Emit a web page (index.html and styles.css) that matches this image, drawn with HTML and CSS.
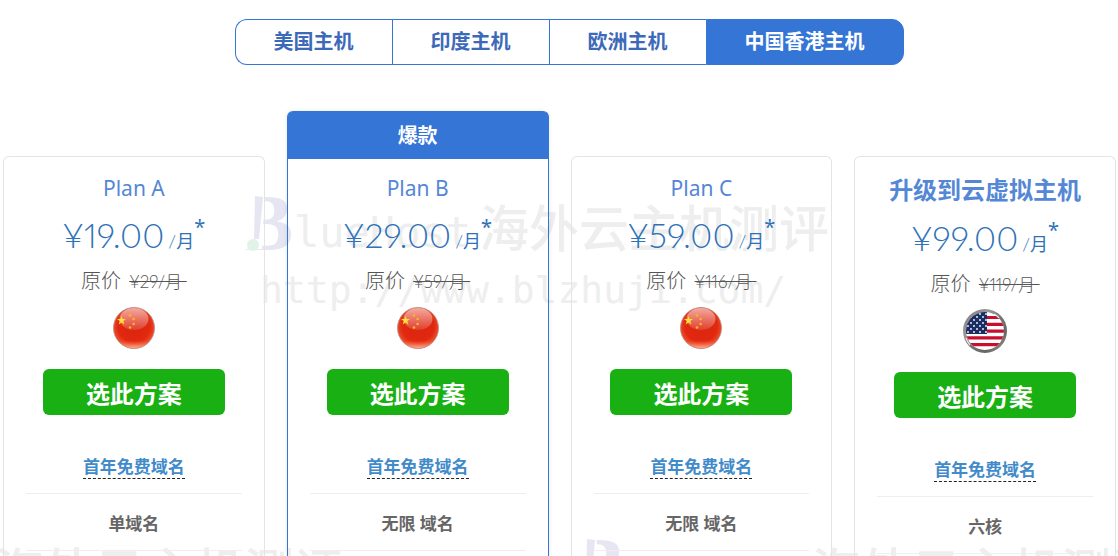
FILE: index.html
```html
<!DOCTYPE html>
<html lang="zh-CN">
<head>
    <meta charset="UTF-8">
    <meta name="viewport" content="width=device-width, initial-scale=1.0">
    <title>主机方案</title>
    <link rel="stylesheet" href="styles.css">
</head>
<body>
    <!-- 图标 -->
    <svg class="sprite" aria-hidden="true">
        <defs>
            <radialGradient id="cn-bg" cx="50%" cy="45%" r="56%">
                <stop offset="0" stop-color="#dc2410"/>
                <stop offset=".7" stop-color="#e0290f"/>
                <stop offset="1" stop-color="#f2593a"/>
            </radialGradient>
            <linearGradient id="gloss" x1="0" y1="0" x2="0" y2="1">
                <stop offset="0" stop-color="#fff" stop-opacity=".6"/>
                <stop offset="1" stop-color="#fff" stop-opacity=".12"/>
            </linearGradient>
            <linearGradient id="cn-low" x1="0" y1="0" x2="0" y2="1">
                <stop offset=".8" stop-color="#ff6a3c" stop-opacity="0"/>
                <stop offset="1" stop-color="#ffb79c"/>
            </linearGradient>
            <linearGradient id="ring" x1="0" y1="0" x2="1" y2="1">
                <stop offset="0" stop-color="#777"/>
                <stop offset=".3" stop-color="#999"/>
                <stop offset=".5" stop-color="#777"/>
                <stop offset=".75" stop-color="#666"/>
                <stop offset="1" stop-color="#aaa"/>
            </linearGradient>
            <clipPath id="us-clip"><circle cx="22" cy="22" r="19"/></clipPath>
            <pattern id="us-stars" width="6" height="6" patternUnits="userSpaceOnUse">
                <circle cx="2" cy="2" r=".9" fill="#fff"/>
                <circle cx="5" cy="5" r=".9" fill="#fff"/>
            </pattern>
        </defs>
        <symbol id="flag-cn" viewBox="0 0 44 44">
            <circle cx="22" cy="22" r="20.5" fill="url(#cn-bg)"/>
            <circle cx="22" cy="22" r="20.5" fill="url(#cn-low)" stroke="#b98a80" stroke-width=".8"/>
            <ellipse cx="22" cy="13" rx="14.5" ry="11" fill="url(#gloss)"/>
            <path fill="#ffe234" d="M9.5 10l1.1 3.1h3.4l-2.7 2 1 3.3-2.8-2-2.8 2 1-3.3-2.7-2h3.4z"/>
            <g fill="#f7b52a">
                <circle cx="18" cy="9.5" r="1.3"/>
                <circle cx="21.6" cy="13" r="1.3"/>
                <circle cx="21.6" cy="18" r="1.3"/>
                <circle cx="18" cy="21.5" r="1.3"/>
            </g>
        </symbol>
        <symbol id="flag-us" viewBox="0 0 44 44">
            <circle cx="22" cy="22" r="22" fill="url(#ring)"/>
            <g clip-path="url(#us-clip)">
                <rect width="44" height="44" fill="#fff"/>
                <path stroke="#c8102e" stroke-width="3.2" d="M0 8.5h44M0 15.3h44M0 22.1h44M0 28.9h44M0 35.7h44"/>
                <rect width="24" height="25" fill="#1b2d63"/>
                <rect width="24" height="24" fill="url(#us-stars)"/>
            </g>
            <path fill="none" stroke="#fff" stroke-opacity=".8" stroke-width="1.2" d="M31 5a19 19 0 0 1 5 4M3 29a20 20 0 0 0 4 7"/>
        </symbol>
        <symbol id="mark" viewBox="0 0 48 62">
            <text x="-6" y="57" class="mark-letter">B</text>
            <path fill="#fff" d="M0 0h19l-3 50v6H0z"/>
            <path fill="#e6e6f3" d="M9 3l8 1-4 42H8z"/>
            <circle cx="7" cy="52" r="6" fill="#e1f3e8"/>
        </symbol>
    </svg>

    <nav class="tabs">
        <button type="button">美国主机</button>
        <button type="button">印度主机</button>
        <button type="button">欧洲主机</button>
        <button type="button" class="active">中国香港主机</button>
    </nav>

    <main class="plans">
        <!-- 水印 -->
        <div class="watermark" aria-hidden="true">
            <svg><use href="#mark"/></svg>
            <p><span>lueHost</span>海外云主机测评</p>
            <p class="url">http://www.blzhuji.com/</p>
        </div>
        <div class="watermark low-left" aria-hidden="true">
            <svg><use href="#mark"/></svg>
            <p><span>lueHost</span>海外云主机测评</p>
        </div>
        <div class="watermark low-right" aria-hidden="true">
            <svg><use href="#mark"/></svg>
            <p><span>lueHost</span>海外云主机测评</p>
        </div>

        <section class="plan">
            <h3>Plan A</h3>
            <p class="price"><span class="yen">¥</span>19.00<small>/<b>月</b></small><sup>*</sup></p>
            <p class="old">原价 <del>¥29/月&nbsp;</del></p>
            <svg class="flag" role="img" aria-label="中国"><use href="#flag-cn"/></svg>
            <button type="button" class="buy">选此方案</button>
            <ul>
                <li><a href="#">首年免费域名</a></li>
                <li>单域名</li>
            </ul>
        </section>

        <section class="plan hot">
            <div class="badge">爆款</div>
            <h3>Plan B</h3>
            <p class="price"><span class="yen">¥</span>29.00<small>/<b>月</b></small><sup>*</sup></p>
            <p class="old">原价 <del>¥59/月&nbsp;</del></p>
            <svg class="flag" role="img" aria-label="中国"><use href="#flag-cn"/></svg>
            <button type="button" class="buy">选此方案</button>
            <ul>
                <li><a href="#">首年免费域名</a></li>
                <li>无限 域名</li>
            </ul>
        </section>

        <section class="plan">
            <h3>Plan C</h3>
            <p class="price"><span class="yen">¥</span>59.00<small>/<b>月</b></small><sup>*</sup></p>
            <p class="old">原价 <del>¥116/月&nbsp;</del></p>
            <svg class="flag" role="img" aria-label="中国"><use href="#flag-cn"/></svg>
            <button type="button" class="buy">选此方案</button>
            <ul>
                <li><a href="#">首年免费域名</a></li>
                <li>无限 域名</li>
            </ul>
        </section>

        <section class="plan cloud">
            <h3>升级到云虚拟主机</h3>
            <p class="price"><span class="yen">¥</span>99.00<small>/<b>月</b></small><sup>*</sup></p>
            <p class="old">原价 <del>¥119/月&nbsp;</del></p>
            <svg class="flag" role="img" aria-label="美国"><use href="#flag-us"/></svg>
            <button type="button" class="buy">选此方案</button>
            <ul>
                <li><a href="#">首年免费域名</a></li>
                <li>六核</li>
            </ul>
        </section>
    </main>
</body>
</html>
```
FILE: styles.css
```css
* {
    box-sizing: border-box;
}
body,p,ul,h3 {
    margin: 0;
    padding: 0;
}
body {
    min-height: 100vh;
    display: flex;
    flex-direction: column;
    background: #fff;
    color: #666;
    font-family: "Noto Sans", "Noto Sans CJK SC", sans-serif;
}
button {
    font-family: inherit;
    cursor: pointer;
}
.sprite {
    position: absolute;
    width: 0;
    height: 0;
}

/* 地区切换 */
.tabs {
    display: flex;
    justify-content: center;
    padding: 19px 0 0 20px;
}
.tabs button {
    height: 46px;
    padding: 0 38px;
    border: 1px solid #3575d5;
    border-right-width: 0;
    background: #fff;
    color: #3c6ab8;
    font-size: 20px;
    font-weight: 700;
    line-height: 30px;
}
.tabs button:first-child {
    border-radius: 12px 0 0 12px;
}
.tabs button:last-child {
    border-right-width: 1px;
    border-radius: 0 12px 12px 0;
}
.tabs .active {
    background: #3575d5;
    color: #fff;
}

/* 方案 */
.plans {
    position: relative;
    flex: 1;
    display: grid;
    grid-template-columns: repeat(4, 1fr);
    gap: 22px;
    padding: 91px 2px 0 3px;
    overflow: hidden;
}
.plan {
    display: flex;
    flex-direction: column;
    align-items: center;
    padding-top: 16px;
    border: 1px solid #e4e4e4;
    border-bottom: 0;
    border-radius: 6px 6px 0 0;
}
.hot {
    margin-top: -45px;
    padding-top: 0;
    border-color: #3575d5;
    box-shadow: 0 0 4px rgba(0,0,0,.1);
}
.badge {
    width: 100%;
    margin-bottom: 14px;
    border-radius: 4px 4px 0 0;
    background: #3575d5;
    color: #fff;
    font-size: 20px;
    font-weight: 700;
    line-height: 47px;
    text-align: center;
}
.plan h3 {
    color: #5487d6;
    font-size: 21px;
    font-weight: 400;
    line-height: 30px;
}
.cloud h3 {
    font-size: 24px;
    font-weight: 700;
    line-height: 33px;
}
.price {
    display: flex;
    align-items: baseline;
    height: 44px;
    margin-top: 10px;
    color: #2f72b8;
    font-family: Lato, "Noto Sans CJK SC", sans-serif;
    font-size: 34px;
    font-weight: 300;
    font-variant-numeric: proportional-nums;
    line-height: 44px;
}
.price small {
    margin-left: 4px;
    font-size: 18px;
}
.price b {
    font-weight: 400;
}
.price sup {
    align-self: flex-start;
    font-family: "Noto Sans", sans-serif;
    font-size: 20px;
    font-weight: 400;
    line-height: 28px;
}
.old {
    margin-top: 9px;
    color: #555;
    font-size: 20px;
    font-weight: 300;
    line-height: 30px;
}
.old del {
    margin-left: 3px;
    font-family: Lato, "Noto Sans CJK SC", sans-serif;
    font-size: 17px;
    font-variant-numeric: proportional-nums;
}
.flag {
    width: 44px;
    height: 44px;
    margin-top: 9px;
}
.buy {
    width: 70%;
    height: 46px;
    margin-top: 19px;
    border: 0;
    border-radius: 6px;
    background: #18b013;
    color: #fff;
    font-size: 24px;
    font-weight: 700;
}
.plan ul {
    align-self: stretch;
    margin: 22px 22px 0;
    list-style: none;
}
.plan li {
    padding: 18px 0 14px;
    border-bottom: 1px solid #eee;
    font-size: 17px;
    font-weight: 700;
    line-height: 24px;
    text-align: center;
}
.plan a {
    border-bottom: 1px dashed #222;
    color: #428bca;
    text-decoration: none;
}

/* 水印 */
.watermark {
    position: absolute;
    left: 246px;
    top: 128px;
    z-index: -1;
    display: grid;
    grid-template-columns: 48px auto;
    color: #eee;
    font-size: 50px;
    font-weight: 500;
    line-height: 70px;
    white-space: nowrap;
}
.watermark svg {
    width: 48px;
    height: 62px;
}
.watermark span,
.watermark .url {
    font-family: "DejaVu Sans Mono", monospace;
    font-size: 42px;
    font-weight: 400;
}
.watermark span {
    margin-right: 8px;
}
.watermark .url {
    grid-column: 1 / 3;
    padding-left: 14px;
    font-size: 38px;
    line-height: 44px;
}
.low-left {
    left: -239px;
    top: 471px;
}
.low-right {
    left: 578px;
    top: 471px;
}
.mark-letter {
    fill: #e6e6f3;
    font: 700 80px "Liberation Serif", serif;
}
```
